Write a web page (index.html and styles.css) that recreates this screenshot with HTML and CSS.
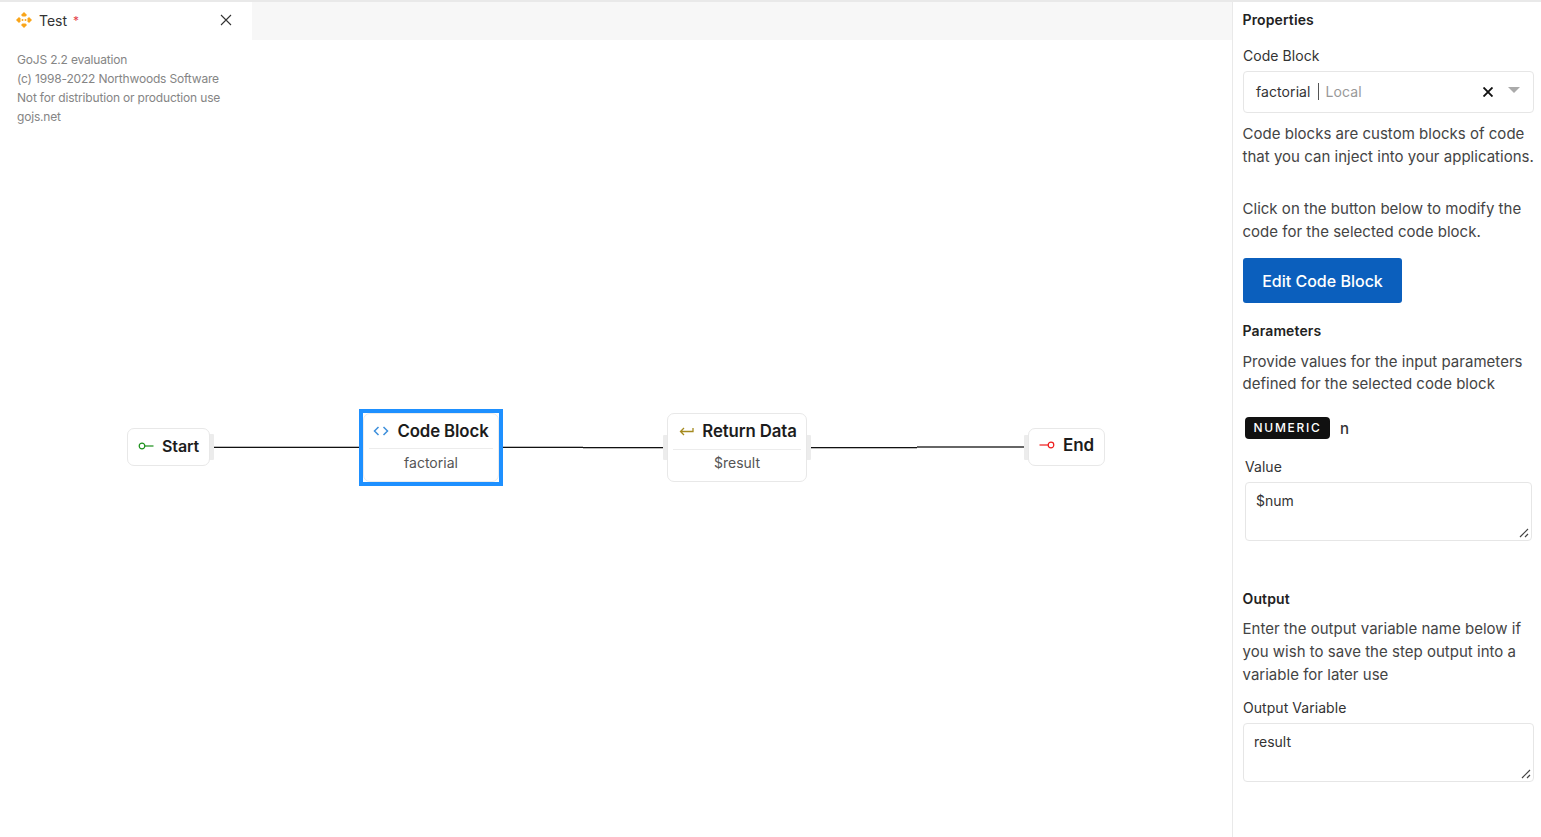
FILE: index.html
```html
<!DOCTYPE html>
<html lang="en">
<head>
<meta charset="utf-8">
<title>Test</title>
<link rel="stylesheet" href="styles.css">
</head>
<body>
<div class="app">
  <main class="main">
    <div class="tabbar">
      <div class="tab">
        <svg class="tab-logo" width="16" height="16" viewBox="0 0 16 16"><g fill="#f9a51a"><path d="M8 0 11 3 9.500 4.500 H6.500 L5 3Z"/><path d="M8 16 11 13 9.500 11.500 H6.500 L5 13Z"/><path d="M0 8 3 5 4.500 6.500 V9.500 L3 11Z"/><path d="M16 8 13 5 11.500 6.500 V9.500 L13 11Z"/><circle cx="6.500" cy="8" r="1"/><circle cx="9.500" cy="8" r="1"/></g></svg>
        <span class="tab-name">Test</span>
        <span class="tab-star">*</span>
        <svg class="tab-close" width="12" height="12" viewBox="0 0 12 12"><path d="M1 1 11 11M11 1 1 11" stroke="#333" stroke-width="1.100" fill="none"/></svg>
      </div>
    </div>
    <div class="canvas">
      <div class="watermark">
        <div>GoJS 2.2 evaluation</div>
        <div>(c) 1998-2022 Northwoods Software</div>
        <div>Not for distribution or production use</div>
        <div>gojs.net</div>
      </div>

      <div class="link link-1"></div>
      <div class="link link-2"></div>
      <div class="link link-3"></div>
      <div class="link link-4"></div>
      <div class="link link-5"></div>

      <div class="port port-start-r"></div>
      <div class="port port-ret-l"></div>
      <div class="port port-ret-r"></div>
      <div class="port port-end-l"></div>

      <div class="node node-start">
        <svg width="16" height="8" viewBox="0 0 16 8"><circle cx="4" cy="4" r="2.800" fill="none" stroke="#1a8f1a" stroke-width="1.200"/><path d="M6.800 4H15.500" stroke="#1a8f1a" stroke-width="1.200"/></svg>
        <span class="node-title title-start">Start</span>
      </div>

      <div class="selected">
        <div class="node node-code">
          <div class="node-head">
            <svg width="16" height="10" viewBox="0 0 16 10"><path d="M5.500 1 1.500 5 5.500 9M10.500 1 14.500 5 10.500 9" fill="none" stroke="#3d8fdb" stroke-width="1.500"/></svg>
            <span class="node-title">Code Block</span>
          </div>
          <div class="node-sub">factorial</div>
        </div>
      </div>

      <div class="node node-return">
        <div class="node-head">
          <svg width="15" height="10" viewBox="0 0 15 10"><path d="M14 2V5.500H1.500M5 2 1.500 5.500 5 9" fill="none" stroke="#a58a1f" stroke-width="1.300"/></svg>
          <span class="node-title">Return Data</span>
        </div>
        <div class="node-sub">$result</div>
      </div>

      <div class="node node-end">
        <svg width="16" height="8" viewBox="0 0 16 8"><circle cx="12" cy="4" r="2.800" fill="none" stroke="#ee1c1c" stroke-width="1.200"/><path d="M.5 4H9.200" stroke="#ee1c1c" stroke-width="1.200"/></svg>
        <span class="node-title title-end">End</span>
      </div>
    </div>
  </main>

  <aside class="panel">
    <h2 class="heading heading-props">Properties</h2>
    <label class="label label-block">Code Block</label>
    <div class="select">
      <span class="select-value">factorial</span>
      <span class="select-bar"></span>
      <span class="select-scope">Local</span>
      <svg class="select-clear" width="10" height="10" viewBox="0 0 10 10"><path d="M.5 .5 9.500 9.500M9.500 .5 .5 9.500" stroke="#111" stroke-width="1.900" fill="none"/></svg>
      <span class="select-caret"></span>
    </div>
    <p class="text text-a">Code blocks are custom blocks of code that you can inject into your applications.</p>
    <p class="text text-b">Click on the button below to modify the code for the selected code block.</p>
    <button class="btn" type="button">Edit Code Block</button>
    <h2 class="heading heading-params">Parameters</h2>
    <p class="text text-c">Provide values for the input parameters defined for the selected code block</p>
    <div class="param">
      <span class="badge">NUMERIC</span>
      <span class="param-name">n</span>
    </div>
    <label class="label label-value">Value</label>
    <textarea class="area area-value">$num</textarea>
    <h2 class="heading heading-output">Output</h2>
    <p class="text text-d">Enter the output variable name below if you wish to save the step output into a variable for later use</p>
    <label class="label label-output">Output Variable</label>
    <textarea class="area area-output">result</textarea>
  </aside>
</div>
</body>
</html>
```
FILE: styles.css
```css
* { box-sizing: border-box; }
html, body { margin: 0; height: 100%; overflow: hidden; background: #fff; }
body { font-family: Inter, "Liberation Sans", sans-serif; color: #222; }

.app { display: flex; height: 837px; border-top: 2px solid #e9e9e9; }
.main { width: 1232px; display: flex; flex-direction: column; flex: none; }

.tabbar { height: 38px; background: #f7f7f7; display: flex; flex: none; }
.tab { width: 252px; background: #fff; display: flex; align-items: center; padding: 0 20px 2px 16px; }
.tab-name { font-size: 14px; margin-left: 7px; color: #333; }
.tab-star { font-size: 12px; color: #e4434b; margin-left: 6px; }
.tab-close { margin-left: auto; }

.canvas { position: relative; flex: 1; background: #fff; }

.watermark { position: absolute; left: 17px; top: 10px; font-size: 12px; line-height: 19px; color: #858585; letter-spacing: -0.18px; }

.link { position: absolute; height: 1px; background: #111; top: 407px; }
.link-1 { left: 214px; width: 146px; box-shadow: 0 -1px 0 #bbb; }
.link-2 { left: 503px; width: 80px; box-shadow: 0 -1px 0 #bbb; }
.link-3 { left: 583px; width: 81px; box-shadow: 0 1px 0 #bbb; }
.link-4 { left: 811px; width: 106px; box-shadow: 0 1px 0 #bbb; }
.link-5 { left: 917px; width: 107px; top: 406px; height: 2px; background: #666; }

.port { position: absolute; width: 5px; background: #ececec; border-radius: 1px; }
.port-start-r { left: 209px; top: 394px; height: 26px; }
.port-ret-l { left: 663px; top: 395px; height: 25px; }
.port-ret-r { left: 806px; top: 395px; height: 25px; }
.port-end-l { left: 1024px; top: 395px; height: 25px; }

.node { position: absolute; background: #fff; border: 1px solid #e8e8e8; border-radius: 7px; }
.node-title { font-size: 16.800px; font-weight: 600; color: #1c1c1c; letter-spacing: -0.1px; }
.title-start { font-size: 16px; letter-spacing: -0.1px; }
.title-end { font-size: 17px; }
.node-head { display: flex; align-items: center; justify-content: center; margin: 0 5px; border-bottom: 1px solid #ececec; gap: 8px; }
.node-sub { font-size: 14px; color: #555; text-align: center; }

.node-start { left: 127px; top: 388px; width: 83px; height: 38px; display: flex; align-items: center; padding: 0 0 3px 10px; gap: 8px; }

.selected { position: absolute; left: 359px; top: 369px; width: 144px; height: 77px; border: 4px solid #1e90ff; background: #fff; }
.node-code { left: 0; top: 0; width: 136px; height: 69px; border-color: #ececec; }
.node-code .node-head { height: 35px; padding-bottom: 1px; }
.node-code .node-sub { line-height: 28px; }

.node-return { left: 667px; top: 373px; width: 140px; height: 69px; }
.node-return .node-head { height: 36px; padding: 0 0 2px 2px; }
.node-return .node-sub { line-height: 26px; }

.node-end { left: 1028px; top: 388px; width: 77px; height: 38px; display: flex; align-items: center; padding: 0 0 4px 10px; gap: 8px; }

.panel { flex: 1; border-left: 1px solid #e9e9e9; padding: 0 7px 0 10px; min-width: 0; }
.heading { margin: 0 0 0 -0.5px; font-size: 14px; line-height: 20px; font-weight: 600; color: #222; letter-spacing: 0.12px; }
.label { display: block; font-size: 14px; line-height: 20px; color: #333; letter-spacing: 0.05px; }
.text { margin: 0 0 0 -0.5px; font-size: 15px; line-height: 23px; color: #444; letter-spacing: 0.02px; }

.heading-props { margin-top: 8px; }
.label-block { margin-top: 16px; }

.select { display: flex; align-items: center; height: 42px; margin-top: 5px; border: 1px solid #e6e6e6; border-radius: 4px; padding: 0 13px 2px 12px; }
.select-value { font-size: 14px; color: #333; letter-spacing: 0.08px; }
.select-bar { width: 1px; height: 17px; background: #555; margin: 0 7px; }
.select-scope { font-size: 14px; color: #999; letter-spacing: 0.08px; }
.select-clear { margin-left: auto; margin-right: 15px; margin-top: 2px; }
.select-caret { width: 0; height: 0; border-left: 6px solid transparent; border-right: 6px solid transparent; border-top: 6px solid #aaa; margin-top: -3px; }

.text-a { margin-top: 9px; }
.text-b { margin-top: 29px; }
.btn { display: block; margin-top: 15px; width: 159px; height: 45px; background: #0b5fbd; color: #fff; border: 0; border-radius: 3px; font: 500 16px Inter, "Liberation Sans", sans-serif; }
.heading-params { margin-top: 18px; }
.text-c { margin-top: 10px; line-height: 22px; }
.param { display: flex; align-items: center; margin: 21px 0 0 2px; height: 24px; }
.badge { width: 85px; height: 22px; background: #111; color: #fff; border-radius: 4px; font-size: 12px; font-weight: 500; letter-spacing: 1.700px; line-height: 22px; text-align: center; }
.param-name { margin-left: 10px; font-size: 15px; font-weight: 500; color: #333; }
.label-value { margin: 17px 0 0 2px; }
.area { display: block; width: 287px; height: 59px; border: 1px solid #e6e6e6; border-radius: 4px; margin: 5px 0 0 2px; padding: 9px 10px; font: 14px/18px Inter, "Liberation Sans", sans-serif; color: #333; outline: none; background: #fff; }
.area::-webkit-resizer { background: url("data:image/svg+xml,%3Csvg xmlns='http://www.w3.org/2000/svg' width='16' height='16'%3E%3Cpath d='M5 13 13 5M10 13 13 10' stroke='%23444' stroke-width='1.200'/%3E%3C/svg%3E") no-repeat right bottom; }
.heading-output { margin-top: 48px; }
.text-d { margin-top: 8px; line-height: 23px; }
.label-output { margin-top: 12px; }
.area-output { width: 291px; margin-left: 0; }
```
